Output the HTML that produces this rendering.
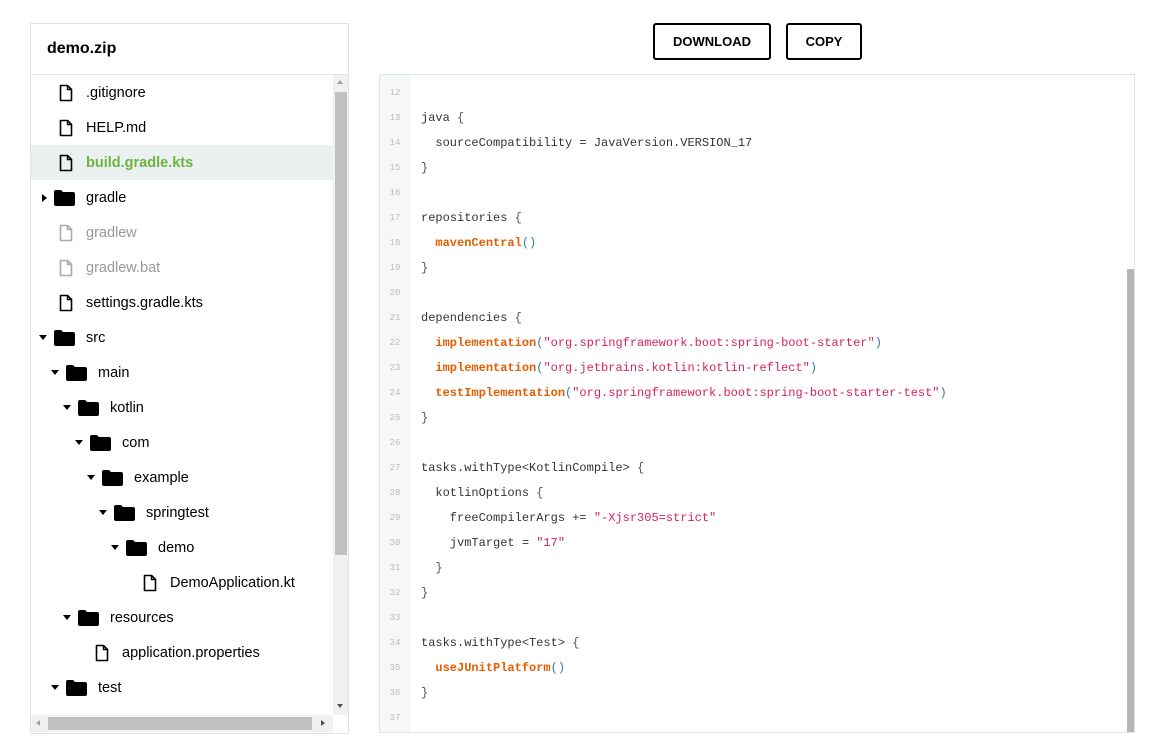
<!DOCTYPE html>
<html><head><meta charset="utf-8"><style>
body{margin:0;width:1149px;height:755px;background:#fff;font-family:"Liberation Sans",sans-serif;position:relative;overflow:hidden}
.left{position:absolute;left:30px;top:23px;width:317px;height:709px;border:1px solid #dde5e5}
.hdr{height:50px;border-bottom:1px solid #dde5e5;font-weight:bold;font-size:16px;line-height:50px;padding-left:16px;color:#000}
.row{position:absolute;left:0;width:302px;height:35px;font-size:14.5px;line-height:35px;color:#000}
.row span{position:absolute;top:1px}
.sel{background:#ebf0f0;color:#6db33f;font-weight:bold}
.dim{color:#999}
.vs{position:absolute;left:302px;top:51px;width:15px;height:640px;background:#f1f1f1}
.hs{position:absolute;left:0;top:691px;width:302px;height:17px;background:#f1f1f1}
.btn{position:absolute;top:23px;height:33px;border:2px solid #000;border-radius:3px;font-weight:bold;font-size:13px;line-height:33px;text-align:center;box-sizing:content-box}
.code{position:absolute;left:379px;top:74px;width:754px;height:657px;border:1px solid #dde5e5;overflow:hidden}
.gut{position:absolute;left:0;top:0;width:30px;height:100%;background:#f6f8f8}
.ln{position:absolute;left:0;width:30px;font-family:"Liberation Mono",monospace;font-size:9px;color:#bbb;text-align:center}
.cl{position:absolute;left:41px;font-family:"Liberation Mono",monospace;font-size:12px;color:#333;white-space:pre}
.k{color:#e65c00;font-weight:bold}.s{color:#d6235e}.p{color:#2a7ab0}.b{color:#555}
</style></head><body>
<div class="left">
<div class="hdr">demo.zip</div>
<div id="tree"></div>
<div class="vs"><div style="position:absolute;left:2px;top:17px;width:12px;height:463px;background:#c1c1c1"></div>
<div style="position:absolute;left:4px;top:5px;border:3px solid transparent;border-bottom:4px solid #a3a3a3;border-top:0"></div>
<div style="position:absolute;left:4px;top:629px;border:3px solid transparent;border-top:4px solid #505050;border-bottom:0"></div></div>
<div class="hs"><div style="position:absolute;left:17px;top:2px;width:264px;height:13px;background:#c1c1c1"></div>
<div style="position:absolute;left:5px;top:5px;border:3px solid transparent;border-right:4px solid #a3a3a3;border-left:0"></div>
<div style="position:absolute;left:290px;top:5px;border:3px solid transparent;border-left:4px solid #505050;border-right:0"></div></div>
</div>
<div class="btn" style="left:653px;width:114px">DOWNLOAD</div>
<div class="btn" style="left:786px;width:72px">COPY</div>
<div class="code"><div class="gut"></div><div id="code"></div>
<div style="position:absolute;left:747px;top:194px;width:7px;height:463px;background:#b5b5b5"></div></div>
<script>
var items=[["f",0,".gitignore"],["f",0,"HELP.md"],["f",0,"build.gradle.kts","sel"],["d",0,"gradle","c"],["f",0,"gradlew","dim"],["f",0,"gradlew.bat","dim"],["f",0,"settings.gradle.kts"],["d",0,"src"],["d",1,"main"],["d",2,"kotlin"],["d",3,"com"],["d",4,"example"],["d",5,"springtest"],["d",6,"demo"],["f",7,"DemoApplication.kt"],["d",2,"resources"],["f",3,"application.properties"],["d",1,"test"]];
var h="";
items.forEach(function(it,i){var top=51+i*35,L=it[1],x=55+12*L,cls=it[3]=="sel"?"sel":it[3]=="dim"?"dim":"";
var col=it[3]=="dim"?"#aaa":"#000";var ic="";
if(it[0]=="f"){ic='<svg style="position:absolute;left:'+(x-27)+'px;top:9px" width="14" height="18" viewBox="0 0 14 18"><path d="M1.5 1.5h7l4 4v11h-11z" fill="none" stroke="'+col+'" stroke-width="1.6" stroke-linejoin="round"/><path d="M8.5 1.5v4h4" fill="none" stroke="'+col+'" stroke-width="1.4"/></svg>';}
else{ic='<svg style="position:absolute;left:'+(x-32)+'px;top:10px" width="21" height="16" viewBox="0 0 21 16"><path d="M0 2q0-2 2-2h5l2 2h10q2 0 2 2v10q0 2-2 2H2q-2 0-2-2z" fill="#000"/></svg>';
ic+=it[3]=="c"?'<div style="position:absolute;left:'+(x-44)+'px;top:14px;border:4px solid transparent;border-left:5px solid #000;border-right:0"></div>':'<div style="position:absolute;left:'+(x-47)+'px;top:15px;border:4px solid transparent;border-top:5px solid #000;border-bottom:0"></div>';}
h+='<div class="row '+cls+'" style="top:'+top+'px">'+ic+'<span style="left:'+x+'px">'+it[2]+'</span></div>';});
document.getElementById("tree").innerHTML=h;
var K=function(t){return '<span class="k">'+t+'</span>'},S=function(t){return '<span class="s">'+t+'</span>'},P=function(t){return '<span class="p">'+t+'</span>'},B=function(t){return '<span class="b">'+t+'</span>'};
var lines=["","java "+B("{"),"  sourceCompatibility = JavaVersion.VERSION_17",B("}"),"","repositories "+B("{"),"  "+K("mavenCentral")+P("()"),B("}"),"","dependencies "+B("{"),
"  "+K("implementation")+P("(")+S('"org.springframework.boot:spring-boot-starter"')+P(")"),
"  "+K("implementation")+P("(")+S('"org.jetbrains.kotlin:kotlin-reflect"')+P(")"),
"  "+K("testImplementation")+P("(")+S('"org.springframework.boot:spring-boot-starter-test"')+P(")"),
B("}"),"","tasks.withType&lt;KotlinCompile&gt; "+B("{"),"  kotlinOptions "+B("{"),"    freeCompilerArgs += "+S('"-Xjsr305=strict"'),"    jvmTarget = "+S('"17"'),"  "+B("}"),B("}"),"","tasks.withType&lt;Test&gt; "+B("{"),"  "+K("useJUnitPlatform")+P("()"),B("}"),""];
var c="";lines.forEach(function(l,i){var y=11+i*25;c+='<div class="ln" style="top:'+(y+2)+'px">'+(12+i)+'</div><div class="cl" style="top:'+y+'px">'+l+'</div>';});
document.getElementById("code").innerHTML=c;
</script>
</body></html>
